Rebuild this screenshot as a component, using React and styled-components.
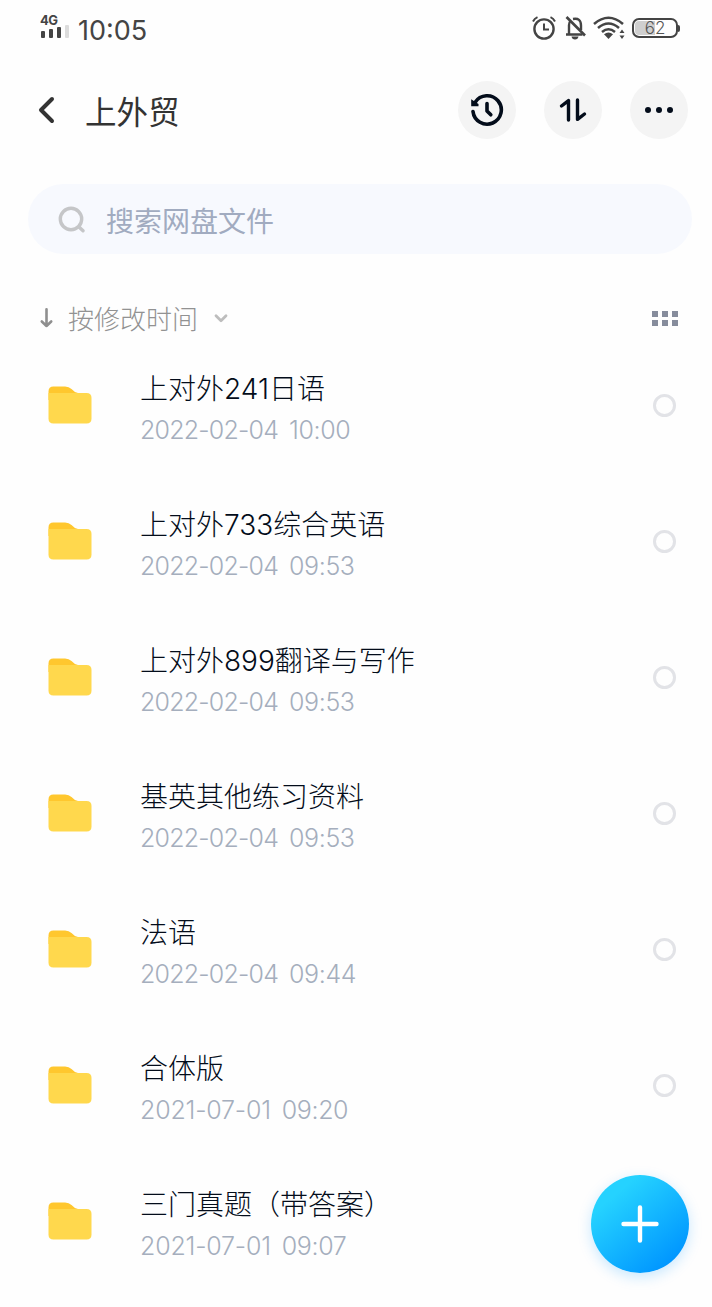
import React from 'react';
import styled, { createGlobalStyle } from 'styled-components';

const colors = {
  ink: '#030c1a',
  title: '#333333',
  status: '#444444',
  muted: '#929292',
  date: '#a5aebd',
  placeholder: '#a1abc0',
  button: '#f4f4f4',
  search: '#f7f9fe',
};

const files = [
  { name: '上对外241日语', date: '2022-02-04', time: '10:00' },
  { name: '上对外733综合英语', date: '2022-02-04', time: '09:53' },
  { name: '上对外899翻译与写作', date: '2022-02-04', time: '09:53' },
  { name: '基英其他练习资料', date: '2022-02-04', time: '09:53' },
  { name: '法语', date: '2022-02-04', time: '09:44' },
  { name: '合体版', date: '2021-07-01', time: '09:20' },
  { name: '三门真题（带答案）', date: '2021-07-01', time: '09:07', hideRadio: true },
];

const GlobalStyle = createGlobalStyle`
  body {
    margin: 0;
    background: #fefefe;
    font-family: Inter, "Noto Sans CJK SC", sans-serif;
  }

  * {
    box-sizing: border-box;
  }
`;

const Screen = styled.div`
  position: relative;
  width: 712px;
  height: 1307px;
  overflow: hidden;
  background: #fefefe;
`;

const StatusBar = styled.div`
  display: flex;
  align-items: center;
  justify-content: space-between;
  height: 60px;
  padding: 0 32px 4px 40px;
  color: ${colors.status};
`;

const StatusGroup = styled.div`
  display: flex;
  align-items: center;
  gap: ${({ $gap }) => $gap}px;
`;

const Signal = styled.div`
  display: flex;
  flex-direction: column;
  width: 29px;
  height: 26px;
  margin-top: -2px;
`;

const Network = styled.span`
  height: 12px;
  font-size: 13px;
  line-height: 12px;
  font-weight: 700;
  letter-spacing: -0.6px;
`;

const Bars = styled.div`
  display: flex;
  align-items: flex-end;
  gap: 4px;
  height: 12px;
  padding-left: 1px;
`;

const Bar = styled.span`
  width: 4px;
  height: ${({ $height }) => $height}px;
  border-radius: 1px;
  background: ${({ $off }) => ($off ? '#dcdcdc' : colors.status)};
`;

const Clock = styled.span`
  font-size: 27px;
  line-height: 32px;
  margin-top: 5px;
`;

const Battery = styled.div`
  display: flex;
  align-items: center;
`;

const BatteryBody = styled.div`
  width: 46px;
  height: 20px;
  border: 2px solid ${colors.status};
  border-radius: 7px;
  background: linear-gradient(to right, #cfcfcf 50%, #fefefe 50%);
  box-shadow: inset 0 0 0 1px #fefefe;
  color: #555;
  font-size: 17px;
  line-height: 17px;
  font-weight: 350;
  text-align: center;
`;

const BatteryTip = styled.span`
  width: 2px;
  height: 7px;
  border-radius: 0 2px 2px 0;
  background: ${colors.status};
`;

const Header = styled.header`
  display: flex;
  align-items: center;
  height: 100px;
  padding: 0 24px 0 38px;
`;

const Title = styled.h1`
  flex: 1;
  margin: 5px 0 0 29px;
  color: ${colors.title};
  font-size: 31.5px;
  line-height: 44px;
  font-weight: 400;
`;

const Actions = styled.div`
  display: flex;
  gap: 28px;
`;

const RoundButton = styled.button`
  display: flex;
  align-items: center;
  justify-content: center;
  width: 58px;
  height: 58px;
  padding: 0;
  border: none;
  border-radius: 50%;
  background: ${colors.button};
  color: ${colors.ink};
`;

const SearchBox = styled.div`
  display: flex;
  align-items: center;
  gap: 20px;
  height: 70px;
  margin: 24px 20px 0 28px;
  padding-left: 30px;
  border-radius: 35px;
  background: ${colors.search};
`;

const Placeholder = styled.span`
  margin-top: 5px;
  color: ${colors.placeholder};
  font-size: 28px;
  line-height: 40px;
`;

const SortBar = styled.div`
  display: flex;
  align-items: center;
  height: 38px;
  margin-top: 45px;
  padding: 0 34px 0 39px;
  color: ${colors.muted};
`;

const SortLabel = styled.span`
  margin: 3px 15px 0 14px;
  font-size: 26px;
  line-height: 38px;
  font-weight: 300;
`;

const Grid = styled.div`
  display: grid;
  grid-template-columns: repeat(3, 6px);
  grid-auto-rows: 6px;
  gap: 3px 4px;
  margin-left: auto;
`;

const GridCell = styled.span`
  background: #868c9c;
`;

const List = styled.ul`
  margin: 0;
  padding: 0;
  list-style: none;
`;

const Row = styled.li`
  display: flex;
  align-items: center;
  height: 136px;
  padding: 0 36px 0 48px;
`;

const FileInfo = styled.div`
  flex: 1;
  margin: 5px 0 0 48px;
`;

const FileName = styled.div`
  color: ${colors.ink};
  font-size: 28px;
  line-height: 40px;
  font-weight: 300;
`;

const FileDate = styled.div`
  display: flex;
  gap: 11px;
  margin-top: 4px;
  color: ${colors.date};
  font-size: 25px;
  line-height: 34px;
  font-weight: 300;
`;

const Day = styled.span`
  letter-spacing: ${({ $wide }) => ($wide ? '-0.2px' : '-0.8px')};
`;

const Time = styled.span`
  letter-spacing: -0.4px;
`;

const Radio = styled.span`
  width: 23px;
  height: 23px;
  border: 3px solid #e2e3e7;
  border-radius: 50%;
`;

const AddButton = styled.button`
  position: absolute;
  right: 23px;
  bottom: 34px;
  display: flex;
  align-items: center;
  justify-content: center;
  width: 98px;
  height: 98px;
  padding: 0;
  border: none;
  border-radius: 50%;
  background: linear-gradient(140deg, #25d2ff 22%, #0096ff 86%);
  box-shadow: 0 4px 14px rgba(0, 150, 255, 0.22);
`;

const AlarmIcon = () => (
  <svg width="24" height="24" viewBox="0 0 24 24" fill="none" stroke="currentColor" strokeWidth="2.4">
    <circle cx="12" cy="13" r="9.6" />
    <path d="M12 7.5V13.5H17" strokeWidth="2" />
    <path d="M1 5.5Q2.5 2.5 5.5 1.2M18.5 1.2Q21.5 2.5 23 5.5" strokeWidth="2" />
  </svg>
);

const MuteIcon = () => (
  <svg width="23" height="24" viewBox="-2 0 23 24" overflow="visible" fill="none" stroke="currentColor" strokeWidth="2.4">
    <path d="M1 18.5H17.5M4 18.5V9Q4 6.5 5.5 5M8 3Q16 1.5 16 9.5V14" />
    <path d="M1.5 1L20 19.5" strokeWidth="2.6" />
    <path d="M6.5 20.5H13.5Q13 23.5 10 23.5Q7 23.5 6.5 20.5Z" fill="currentColor" stroke="none" />
  </svg>
);

const WifiIcon = () => (
  <svg width="32" height="24" viewBox="0 0 32 24" fill="none" stroke="currentColor" strokeWidth="2.5">
    <path d="M1 8Q15.5 -4.5 30 8" />
    <path d="M5 12Q15.5 3 26 12" />
    <path d="M9 16Q15.5 10.5 22 16" />
    <path d="M11 18.2Q15.5 14.8 20 18.2L15.5 23Z" fill="currentColor" stroke="none" />
    <path d="M26.5 17L29 13.5L31.5 17ZM26.5 19.5L29 23L31.5 19.5Z" fill="currentColor" stroke="none" />
  </svg>
);

const BackIcon = () => (
  <svg width="18" height="28" viewBox="0 0 18 28" fill="none" stroke="#333" strokeWidth="4" strokeLinecap="round" strokeLinejoin="round">
    <path d="M14 3L3 14L14 25" />
  </svg>
);

const HistoryIcon = () => (
  <svg width="34" height="34" viewBox="0 0 34 34" fill="none" stroke="currentColor" strokeWidth="3.6" strokeLinecap="round" strokeLinejoin="round">
    <path d="M3 18.5A14.2 14.2 0 1 0 5.2 9.2" />
    <path d="M17 10.5V18L20.8 21.8" />
    <path d="M1.2 6.2L8.5 11V13.2H1.2Z" fill="currentColor" stroke="none" />
  </svg>
);

const TransferIcon = () => (
  <svg width="28" height="24" viewBox="0 0 28 24" fill="none" stroke="currentColor" strokeWidth="3.4" strokeLinecap="round" strokeLinejoin="round">
    <path d="M2.5 8L9.5 2.6V22" />
    <path d="M18.5 2V21.4L25.5 16" />
  </svg>
);

const MoreIcon = () => (
  <svg width="30" height="8" viewBox="0 0 30 8" fill="currentColor">
    <circle cx="4" cy="4" r="3" />
    <circle cx="15" cy="4" r="3" />
    <circle cx="26" cy="4" r="3" />
  </svg>
);

const SearchIcon = () => (
  <svg width="28" height="28" viewBox="0 0 28 28" fill="none" stroke="#c5c6c8" strokeWidth="3.4" strokeLinecap="round">
    <circle cx="13" cy="14" r="10.7" />
    <path d="M21 22L25 25.8" />
  </svg>
);

const ArrowDownIcon = () => (
  <svg width="15" height="20" viewBox="0 0 15 20" fill="none" stroke="#8f8f8f" strokeWidth="2.6" strokeLinecap="round" strokeLinejoin="round">
    <path d="M7.5 1.3V18M2.8 13.5L7.5 18L12.2 13.5" />
  </svg>
);

const ChevronIcon = () => (
  <svg width="16" height="10" viewBox="0 0 16 10" fill="none" stroke="#bdbdbd" strokeWidth="2.8" strokeLinecap="round" strokeLinejoin="round">
    <path d="M3 2.8L8 7.8L13 2.8" />
  </svg>
);

const FolderIcon = () => (
  <svg width="44" height="38" viewBox="0 0 44 38">
    <path d="M0.5 12V5.5Q0.5 0.5 5.5 0.5H17Q21 0.5 23.5 3Q26 6 30 7V14H0.5Z" fill="#ffc72e" />
    <path d="M0.5 7H38.5Q43.5 7 43.5 12V32.5Q43.5 37.5 38.5 37.5H5.5Q0.5 37.5 0.5 32.5Z" fill="#ffd84d" />
  </svg>
);

const PlusIcon = () => (
  <svg width="38" height="38" viewBox="0 0 38 38" stroke="#fff" strokeWidth="4.4" strokeLinecap="round">
    <path d="M19 2.5V35.5M2.5 19H35.5" />
  </svg>
);

const App = () => (
  <>
    <GlobalStyle />
    <Screen>
      <StatusBar>
        <StatusGroup $gap={9}>
          <Signal>
            <Network>4G</Network>
            <Bars>
              <Bar $height={7} />
              <Bar $height={9} />
              <Bar $height={11} />
              <Bar $height={13} $off />
            </Bars>
          </Signal>
          <Clock>10:05</Clock>
        </StatusGroup>
        <StatusGroup $gap={7}>
          <AlarmIcon />
          <MuteIcon />
          <WifiIcon />
          <Battery>
            <BatteryBody>62</BatteryBody>
            <BatteryTip />
          </Battery>
        </StatusGroup>
      </StatusBar>
      <Header>
        <BackIcon />
        <Title>上外贸</Title>
        <Actions>
          <RoundButton><HistoryIcon /></RoundButton>
          <RoundButton><TransferIcon /></RoundButton>
          <RoundButton><MoreIcon /></RoundButton>
        </Actions>
      </Header>
      <SearchBox>
        <SearchIcon />
        <Placeholder>搜索网盘文件</Placeholder>
      </SearchBox>
      <SortBar>
        <ArrowDownIcon />
        <SortLabel>按修改时间</SortLabel>
        <ChevronIcon />
        <Grid>
          {[0, 1, 2, 3, 4, 5].map((cell) => <GridCell key={cell} />)}
        </Grid>
      </SortBar>
      <List>
        {files.map(({ name, date, time, hideRadio }) => (
          <Row key={name}>
            <FolderIcon />
            <FileInfo>
              <FileName>{name}</FileName>
              <FileDate>
                <Day $wide={date.includes('1')}>{date}</Day>
                <Time>{time}</Time>
              </FileDate>
            </FileInfo>
            {!hideRadio && <Radio />}
          </Row>
        ))}
      </List>
      <AddButton><PlusIcon /></AddButton>
    </Screen>
  </>
);

export default App;
